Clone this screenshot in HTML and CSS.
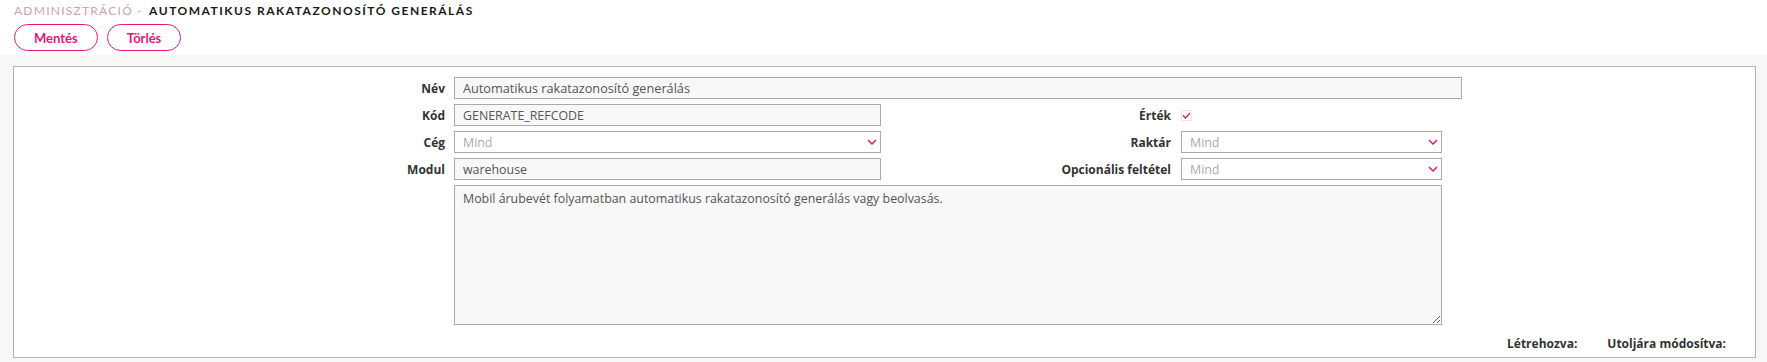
FILE: index.html
```html
<!DOCTYPE html>
<html lang="hu">
<head>
  <meta charset="UTF-8" />
  <meta name="viewport" content="width=device-width, initial-scale=1.0" />
  <title>Automatikus rakatazonosító generálás</title>
  <link rel="stylesheet" href="styles.css">
</head>
<body>
  <div class="top">
    <div class="crumb">
      <span class="crumb-parent">Adminisztráció -</span>
      <span class="crumb-title">Automatikus rakatazonosító generálás</span>
    </div>
    <div class="buttons">
      <button class="btn">Mentés</button>
      <button class="btn">Törlés</button>
    </div>
  </div>

  <div class="page">
    <div class="panel">
      <div class="form">
        <label class="lbl">Név</label>
        <input class="field wide" type="text" value="Automatikus rakatazonosító generálás">

        <label class="lbl">Kód</label>
        <input class="field" type="text" value="GENERATE_REFCODE">
        <label class="lbl lbl-right">Érték</label>
        <div class="check-cell">
          <span class="checkbox">
            <svg width="9" height="7" viewBox="0 0 9 7"><path d="M1 3.5 L3.5 6 L8 1" fill="none" stroke="#e4167a" stroke-width="1.4"/></svg>
          </span>
        </div>

        <label class="lbl">Cég</label>
        <div class="field select"><span>Mind</span><svg class="chev" width="10" height="6" viewBox="0 0 10 6"><path d="M1 1 L5 5 L9 1" fill="none" stroke="#e4167a" stroke-width="1.5"/></svg></div>
        <label class="lbl lbl-right">Raktár</label>
        <div class="field select"><span>Mind</span><svg class="chev" width="10" height="6" viewBox="0 0 10 6"><path d="M1 1 L5 5 L9 1" fill="none" stroke="#e4167a" stroke-width="1.5"/></svg></div>

        <label class="lbl">Modul</label>
        <input class="field" type="text" value="warehouse">
        <label class="lbl lbl-right">Opcionális feltétel</label>
        <div class="field select"><span>Mind</span><svg class="chev" width="10" height="6" viewBox="0 0 10 6"><path d="M1 1 L5 5 L9 1" fill="none" stroke="#e4167a" stroke-width="1.5"/></svg></div>

        <span class="lbl"></span>
        <textarea class="field note">Mobil árubevét folyamatban automatikus rakatazonosító generálás vagy beolvasás.</textarea>
      </div>

      <div class="meta">
        <span>Létrehozva:</span>
        <span>Utoljára módosítva:</span>
      </div>
    </div>
  </div>
</body>
</html>
```

FILE: styles.css
```css
body {
  margin: 0;
  font-family: "Open Sans", "Liberation Sans", sans-serif;
  font-size: 12px;
  color: #333;
  background: #f7f7f7;
}

.top { background: #fff; padding: 1px 14px 4px; }
.crumb { font-family: Lato, "Open Sans", sans-serif; font-size: 12px; line-height: 20px; text-transform: uppercase; }
.crumb-parent { color: #c9a3b8; letter-spacing: 1.25px; }
.crumb-title { color: #1a1a1a; font-weight: bold; letter-spacing: 1.5px; margin-left: 3px; }

.buttons { display: flex; gap: 9px; margin-top: 3px; }
.btn {
  height: 27px;
  padding: 0 19px;
  border: 1px solid #e4167a;
  border-radius: 14px;
  background: #fff;
  color: #e4167a;
  font-family: Lato, "Open Sans", sans-serif;
  font-size: 13px;
  font-weight: bold;
  cursor: pointer;
}

.page { padding: 11px 11px 5px 13px; }
.panel {
  background: #fff;
  border: 1px solid #b3b3b3;
  padding: 10px 0 4px;
}

.form {
  display: grid;
  grid-template-columns: 440px 427px 300px 261px 20px;
  row-gap: 5px;
  align-items: center;
}
.lbl { grid-column: 1; text-align: right; padding-right: 9px; font-weight: bold; color: #333; }
.lbl-right { grid-column: 3; padding-right: 10px; }

.field {
  box-sizing: border-box;
  height: 22px;
  border: 1px solid #aaa;
  background: #f8f8f8;
  padding: 0 8px;
  font-family: "Open Sans", "Liberation Sans", sans-serif;
  font-size: 12.4px;
  color: #555;
  outline: none;
}
.wide { grid-column: 2 / 6; font-size: 12.7px; }

.select {
  display: flex;
  align-items: center;
  justify-content: space-between;
  background: #fff;
  color: #aaa;
  padding-right: 3px;
}
.chev { display: block; }

.check-cell { height: 22px; display: flex; align-items: center; }
.checkbox {
  box-sizing: border-box;
  width: 11px;
  height: 11px;
  border: 1px solid #e8e8e8;
  display: flex;
  align-items: center;
  justify-content: center;
}

.note {
  grid-column: 2 / 5;
  height: 140px;
  padding: 5px 8px;
  resize: both;
  line-height: 16px;
  font-size: 12.4px;
}

.meta {
  display: flex;
  justify-content: flex-end;
  gap: 30px;
  padding: 10px 29px 0 0;
  font-weight: bold;
  line-height: 18px;
}
```
